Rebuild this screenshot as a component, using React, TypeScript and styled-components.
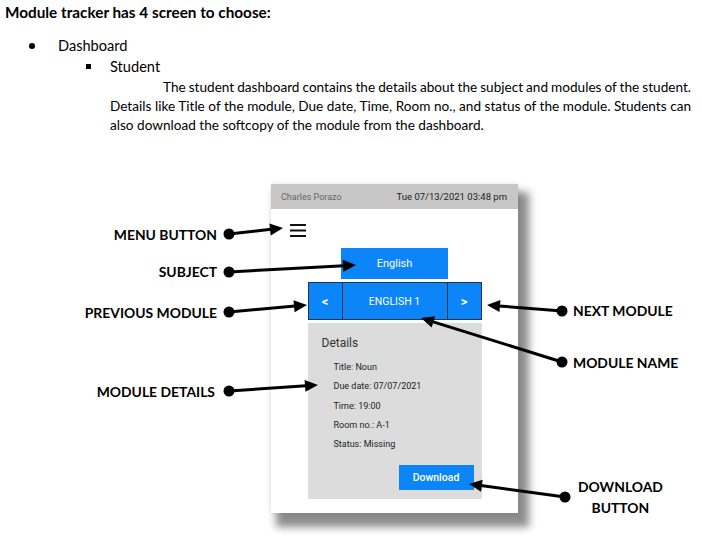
import React from 'react';
import styled, { createGlobalStyle } from 'styled-components';

const DOC_FONT = `'Lato', 'Liberation Sans', sans-serif`;
const APP_FONT = `'Roboto', 'Liberation Sans', sans-serif`;
const BLUE = '#0b85f7';

const GlobalStyle = createGlobalStyle`
    html, body {
        margin: 0;
        padding: 0;
        background: #ffffff;
    }
    * {
        box-sizing: border-box;
    }
`;

const Page = styled.div`
    position: relative;
    width: 702px;
    height: 536px;
    overflow: hidden;
    background: #ffffff;
    color: #000000;
    font-family: ${DOC_FONT};
`;

const Document = styled.div`
    padding-left: 5px;
`;

const Title = styled.h1`
    margin: 0 0 11px;
    font-size: 15.3px;
    font-weight: 700;
    line-height: 24px;
`;

const ListItem = styled.div<{ $indent: number }>`
    display: flex;
    align-items: center;
    height: 21px;
    padding-left: ${props => props.$indent}px;
    font-size: 14.6px;
`;

const Marker = styled.span<{ $width: number }>`
    display: inline-flex;
    width: ${props => props.$width}px;
    align-items: center;
`;

const Dot = styled.span`
    width: 6px;
    height: 6px;
    border-radius: 50%;
    background: #000;
`;

const Square = styled.span`
    width: 5px;
    height: 5px;
    background: #000;
`;

const Paragraph = styled.div`
    width: 581px;
    margin: 1px 0 0 105px;
    font-size: 13.6px;
    line-height: 19px;
`;

const Line = styled.div<{ $indent?: number; $justify?: boolean }>`
    padding-left: ${props => props.$indent || 0}px;
    word-spacing: ${props => (props.$justify ? '-1px' : '0')};
    text-align: ${props => (props.$justify ? 'justify' : 'left')};
    text-align-last: ${props => (props.$justify ? 'justify' : 'left')};
`;

const Figure = styled.div`
    margin-top: 49px;
    padding-left: 271px;
`;

const Phone = styled.div`
    width: 247px;
    height: 329px;
    background: #ffffff;
    font-family: ${APP_FONT};
    box-shadow: 8px 11px 8px 3px rgba(0, 0, 0, 0.45), 0 0 5px rgba(0, 0, 0, 0.1);
`;

const StatusBar = styled.div`
    display: flex;
    justify-content: space-between;
    align-items: center;
    height: 25px;
    padding: 0 11px 0 10px;
    background: #c7c7c7;
`;

const UserName = styled.span`
    font-size: 9px;
    color: #666666;
`;

const DateTime = styled.span`
    font-size: 9.5px;
    color: #222222;
`;

const PhoneBody = styled.div`
    display: flex;
    flex-direction: column;
    align-items: center;
    padding: 13px 0 14px;
`;

const MenuRow = styled.div`
    align-self: stretch;
    height: 13px;
    padding-left: 19px;
`;

const Subject = styled.div`
    display: flex;
    align-items: center;
    justify-content: center;
    width: 107px;
    height: 31px;
    margin-top: 13px;
    background: ${BLUE};
    color: #ffffff;
    font-size: 11px;
`;

const NavBar = styled.div`
    display: grid;
    grid-template-columns: 33px 1fr 34px;
    width: 174px;
    height: 38px;
    margin-top: 3px;
    border: 1px solid #22354a;
    background: ${BLUE};
    color: #ffffff;
`;

const NavCell = styled.div<{ $bold?: boolean; $divider?: boolean }>`
    display: flex;
    align-items: center;
    justify-content: center;
    border-left: ${props => (props.$divider ? '1px solid #22354a' : 'none')};
    font-size: ${props => (props.$bold ? '13px' : '10.5px')};
    font-weight: ${props => (props.$bold ? 700 : 400)};
`;

const DetailsPanel = styled.div`
    display: flex;
    flex-direction: column;
    width: 174px;
    height: 176px;
    margin-top: 3px;
    padding: 12px 8px 9px 14px;
    background: #dcdcdc;
`;

const DetailsTitle = styled.div`
    font-size: 12px;
    color: #333333;
    line-height: 16px;
`;

const DetailList = styled.div`
    display: flex;
    flex-direction: column;
    gap: 7.3px;
    margin-top: 10px;
    padding-left: 12px;
`;

const DetailItem = styled.div`
    font-size: 9px;
    line-height: 12px;
    color: #222222;
`;

const DownloadButton = styled.div`
    display: flex;
    align-items: center;
    justify-content: center;
    align-self: flex-end;
    width: 75px;
    height: 25px;
    margin-top: auto;
    background: ${BLUE};
    color: #ffffff;
    font-size: 10.5px;
    font-weight: 500;
`;

const Callout = styled.div<{ $left?: number; $right?: number; $top: number }>`
    position: absolute;
    top: ${props => props.$top}px;
    ${props => (props.$left !== undefined ? `left: ${props.$left}px;` : '')}
    ${props => (props.$right !== undefined ? `right: ${props.$right}px;` : '')}
    font-family: ${DOC_FONT};
    font-size: 13.9px;
    font-weight: 700;
    line-height: 21px;
    text-align: center;
    white-space: nowrap;
`;

const Overlay = styled.svg`
    position: absolute;
    left: 0;
    top: 0;
    pointer-events: none;
`;

const MenuIcon = () => (
    <svg width="16" height="13" viewBox="0 0 16 13">
        <rect x="0" y="0" width="16" height="2" fill="#111" />
        <rect x="0" y="5.5" width="16" height="2" fill="#111" />
        <rect x="0" y="11" width="16" height="2" fill="#111" />
    </svg>
);

interface ArrowProps {
    from: [number, number];
    to: [number, number];
}

const Arrow = ({ from, to }: ArrowProps) => {
    const [x1, y1] = from;
    const [x2, y2] = to;
    const len = Math.hypot(x2 - x1, y2 - y1);
    const ux = (x2 - x1) / len;
    const uy = (y2 - y1) / len;
    const head = 13;
    const half = 6;
    const bx = x2 - ux * head;
    const by = y2 - uy * head;
    const points = [
        `${x2},${y2}`,
        `${bx - uy * half},${by + ux * half}`,
        `${bx + uy * half},${by - ux * half}`,
    ].join(' ');
    return (
        <g>
            <circle cx={x1} cy={y1} r={5.5} fill="#000" />
            <line x1={x1} y1={y1} x2={bx + ux} y2={by + uy} stroke="#000" strokeWidth={3} />
            <polygon points={points} fill="#000" />
        </g>
    );
};

const arrows: ArrowProps[] = [
    { from: [229, 234], to: [283, 228] },
    { from: [229, 272], to: [356, 265] },
    { from: [229, 312], to: [307, 305] },
    { from: [229, 391], to: [318, 385] },
    { from: [562, 311], to: [487, 305] },
    { from: [562, 362], to: [421, 318] },
    { from: [565, 497], to: [469, 484] },
];

const details = ['Title: Noun', 'Due date: 07/07/2021', 'Time: 19:00', 'Room no.: A-1', 'Status: Missing'];

const App = () => {
    return (
        <Page>
            <GlobalStyle />
            <Document>
                <Title>Module tracker has 4 screen to choose:</Title>
                <ListItem $indent={24}>
                    <Marker $width={29}>
                        <Dot />
                    </Marker>
                    Dashboard
                </ListItem>
                <ListItem $indent={81}>
                    <Marker $width={24}>
                        <Square />
                    </Marker>
                    Student
                </ListItem>
                <Paragraph>
                    <Line $indent={53} $justify>
                        The student dashboard contains the details about the subject and modules of the student.
                    </Line>
                    <Line $justify>
                        Details like Title of the module, Due date, Time, Room no., and status of the module. Students can
                    </Line>
                    <Line>also download the softcopy of the module from the dashboard.</Line>
                </Paragraph>
            </Document>

            <Figure>
                <Phone>
                    <StatusBar>
                        <UserName>Charles Porazo</UserName>
                        <DateTime>Tue 07/13/2021 03:48 pm</DateTime>
                    </StatusBar>
                    <PhoneBody>
                        <MenuRow>
                            <MenuIcon />
                        </MenuRow>
                        <Subject>English</Subject>
                        <NavBar>
                            <NavCell $bold>&lt;</NavCell>
                            <NavCell $divider>ENGLISH 1</NavCell>
                            <NavCell $bold $divider>&gt;</NavCell>
                        </NavBar>
                        <DetailsPanel>
                            <DetailsTitle>Details</DetailsTitle>
                            <DetailList>
                                {details.map(item => (
                                    <DetailItem key={item}>{item}</DetailItem>
                                ))}
                            </DetailList>
                            <DownloadButton>Download</DownloadButton>
                        </DetailsPanel>
                    </PhoneBody>
                </Phone>
            </Figure>

            <Callout $right={485} $top={224}>MENU BUTTON</Callout>
            <Callout $right={485} $top={261}>SUBJECT</Callout>
            <Callout $right={485} $top={302}>PREVIOUS MODULE</Callout>
            <Callout $right={487} $top={381}>MODULE DETAILS</Callout>
            <Callout $left={573} $top={300}>NEXT MODULE</Callout>
            <Callout $left={573} $top={352}>MODULE NAME</Callout>
            <Callout $left={578} $top={476}>
                DOWNLOAD
                <br />
                BUTTON
            </Callout>

            <Overlay width={702} height={536} viewBox="0 0 702 536">
                {arrows.map((a, i) => (
                    <Arrow key={i} from={a.from} to={a.to} />
                ))}
            </Overlay>
        </Page>
    );
};

export default App;
